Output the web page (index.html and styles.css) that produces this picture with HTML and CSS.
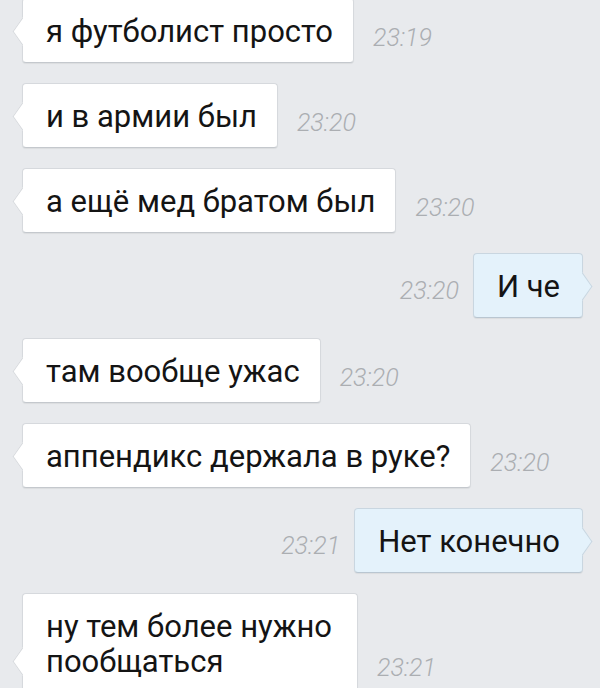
FILE: index.html
```html
<!DOCTYPE html>
<html lang="ru">

<head>
    <meta charset="UTF-8">
    <meta name="viewport" content="width=device-width, initial-scale=1.0">
    <title>Чат</title>
    <link rel="stylesheet" href="styles.css">
</head>

<body>
    <div class="chat">
        <div class="row in">
            <div class="bubble">я футболист просто</div>
            <div class="time">23:19</div>
        </div>
        <div class="row in">
            <div class="bubble">и в армии был</div>
            <div class="time">23:20</div>
        </div>
        <div class="row in">
            <div class="bubble">а ещё мед братом был</div>
            <div class="time">23:20</div>
        </div>
        <div class="row out">
            <div class="time">23:20</div>
            <div class="bubble">И че</div>
        </div>
        <div class="row in">
            <div class="bubble">там вообще ужас</div>
            <div class="time">23:20</div>
        </div>
        <div class="row in">
            <div class="bubble">аппендикс держала в руке?</div>
            <div class="time">23:20</div>
        </div>
        <div class="row out">
            <div class="time">23:21</div>
            <div class="bubble">Нет конечно</div>
        </div>
        <div class="row in">
            <div class="bubble bubble-wide">ну тем более нужно пообщаться</div>
            <div class="time">23:21</div>
        </div>
    </div>
</body>

</html>
```

FILE: styles.css
```css
body {
    margin: 0;
    background-color: #e8eaed;
    font-family: Roboto, "Noto Sans", sans-serif;
    color: #141414;
    overflow: hidden;
}

.chat {
    display: flex;
    flex-direction: column;
    gap: 20px;
    padding: 0 17px 0 22px;
    margin-top: -2px;
    height: 690px;
    overflow: hidden;
}

.row {
    display: flex;
    align-items: flex-end;
    flex-shrink: 0;
}

.row.out {
    justify-content: flex-end;
}

.bubble {
    position: relative;
    box-sizing: border-box;
    padding: 15px 20px 13px 23px;
    font-size: 31px;
    line-height: 35px;
    white-space: nowrap;
    background-color: #ffffff;
    border: 1px solid #d6d9dd;
    border-bottom-color: #c4c8cd;
    border-radius: 4px;
    box-shadow: 0 1px 1px rgba(0, 0, 0, 0.06);
}

.bubble-wide {
    width: 336px;
    white-space: normal;
}

/* tail of the bubble */
.bubble::before {
    content: "";
    position: absolute;
    bottom: 22px;
    width: 16px;
    height: 16px;
    background-color: inherit;
    border: 1px solid #d6d9dd;
    transform: rotate(45deg) skew(10deg, 10deg);
}

.in .bubble::before {
    left: -9px;
    border-top: none;
    border-right: none;
}

.out .bubble {
    padding: 15px 22px 13px 23px;
    background-color: #e4f2fb;
    border-color: #c9d6e0;
    border-bottom-color: #b9c6d1;
}

.out .bubble::before {
    right: -9px;
    border-color: #c9d6e0;
    border-bottom: none;
    border-left: none;
}

.time {
    font-size: 25px;
    line-height: 24px;
    font-style: italic;
    font-weight: 300;
    color: #abaeb2;
    padding-bottom: 13px;
}

.in .time {
    margin-left: 19px;
}

.out .time {
    margin-right: 14px;
    padding-bottom: 15px;
}
```
